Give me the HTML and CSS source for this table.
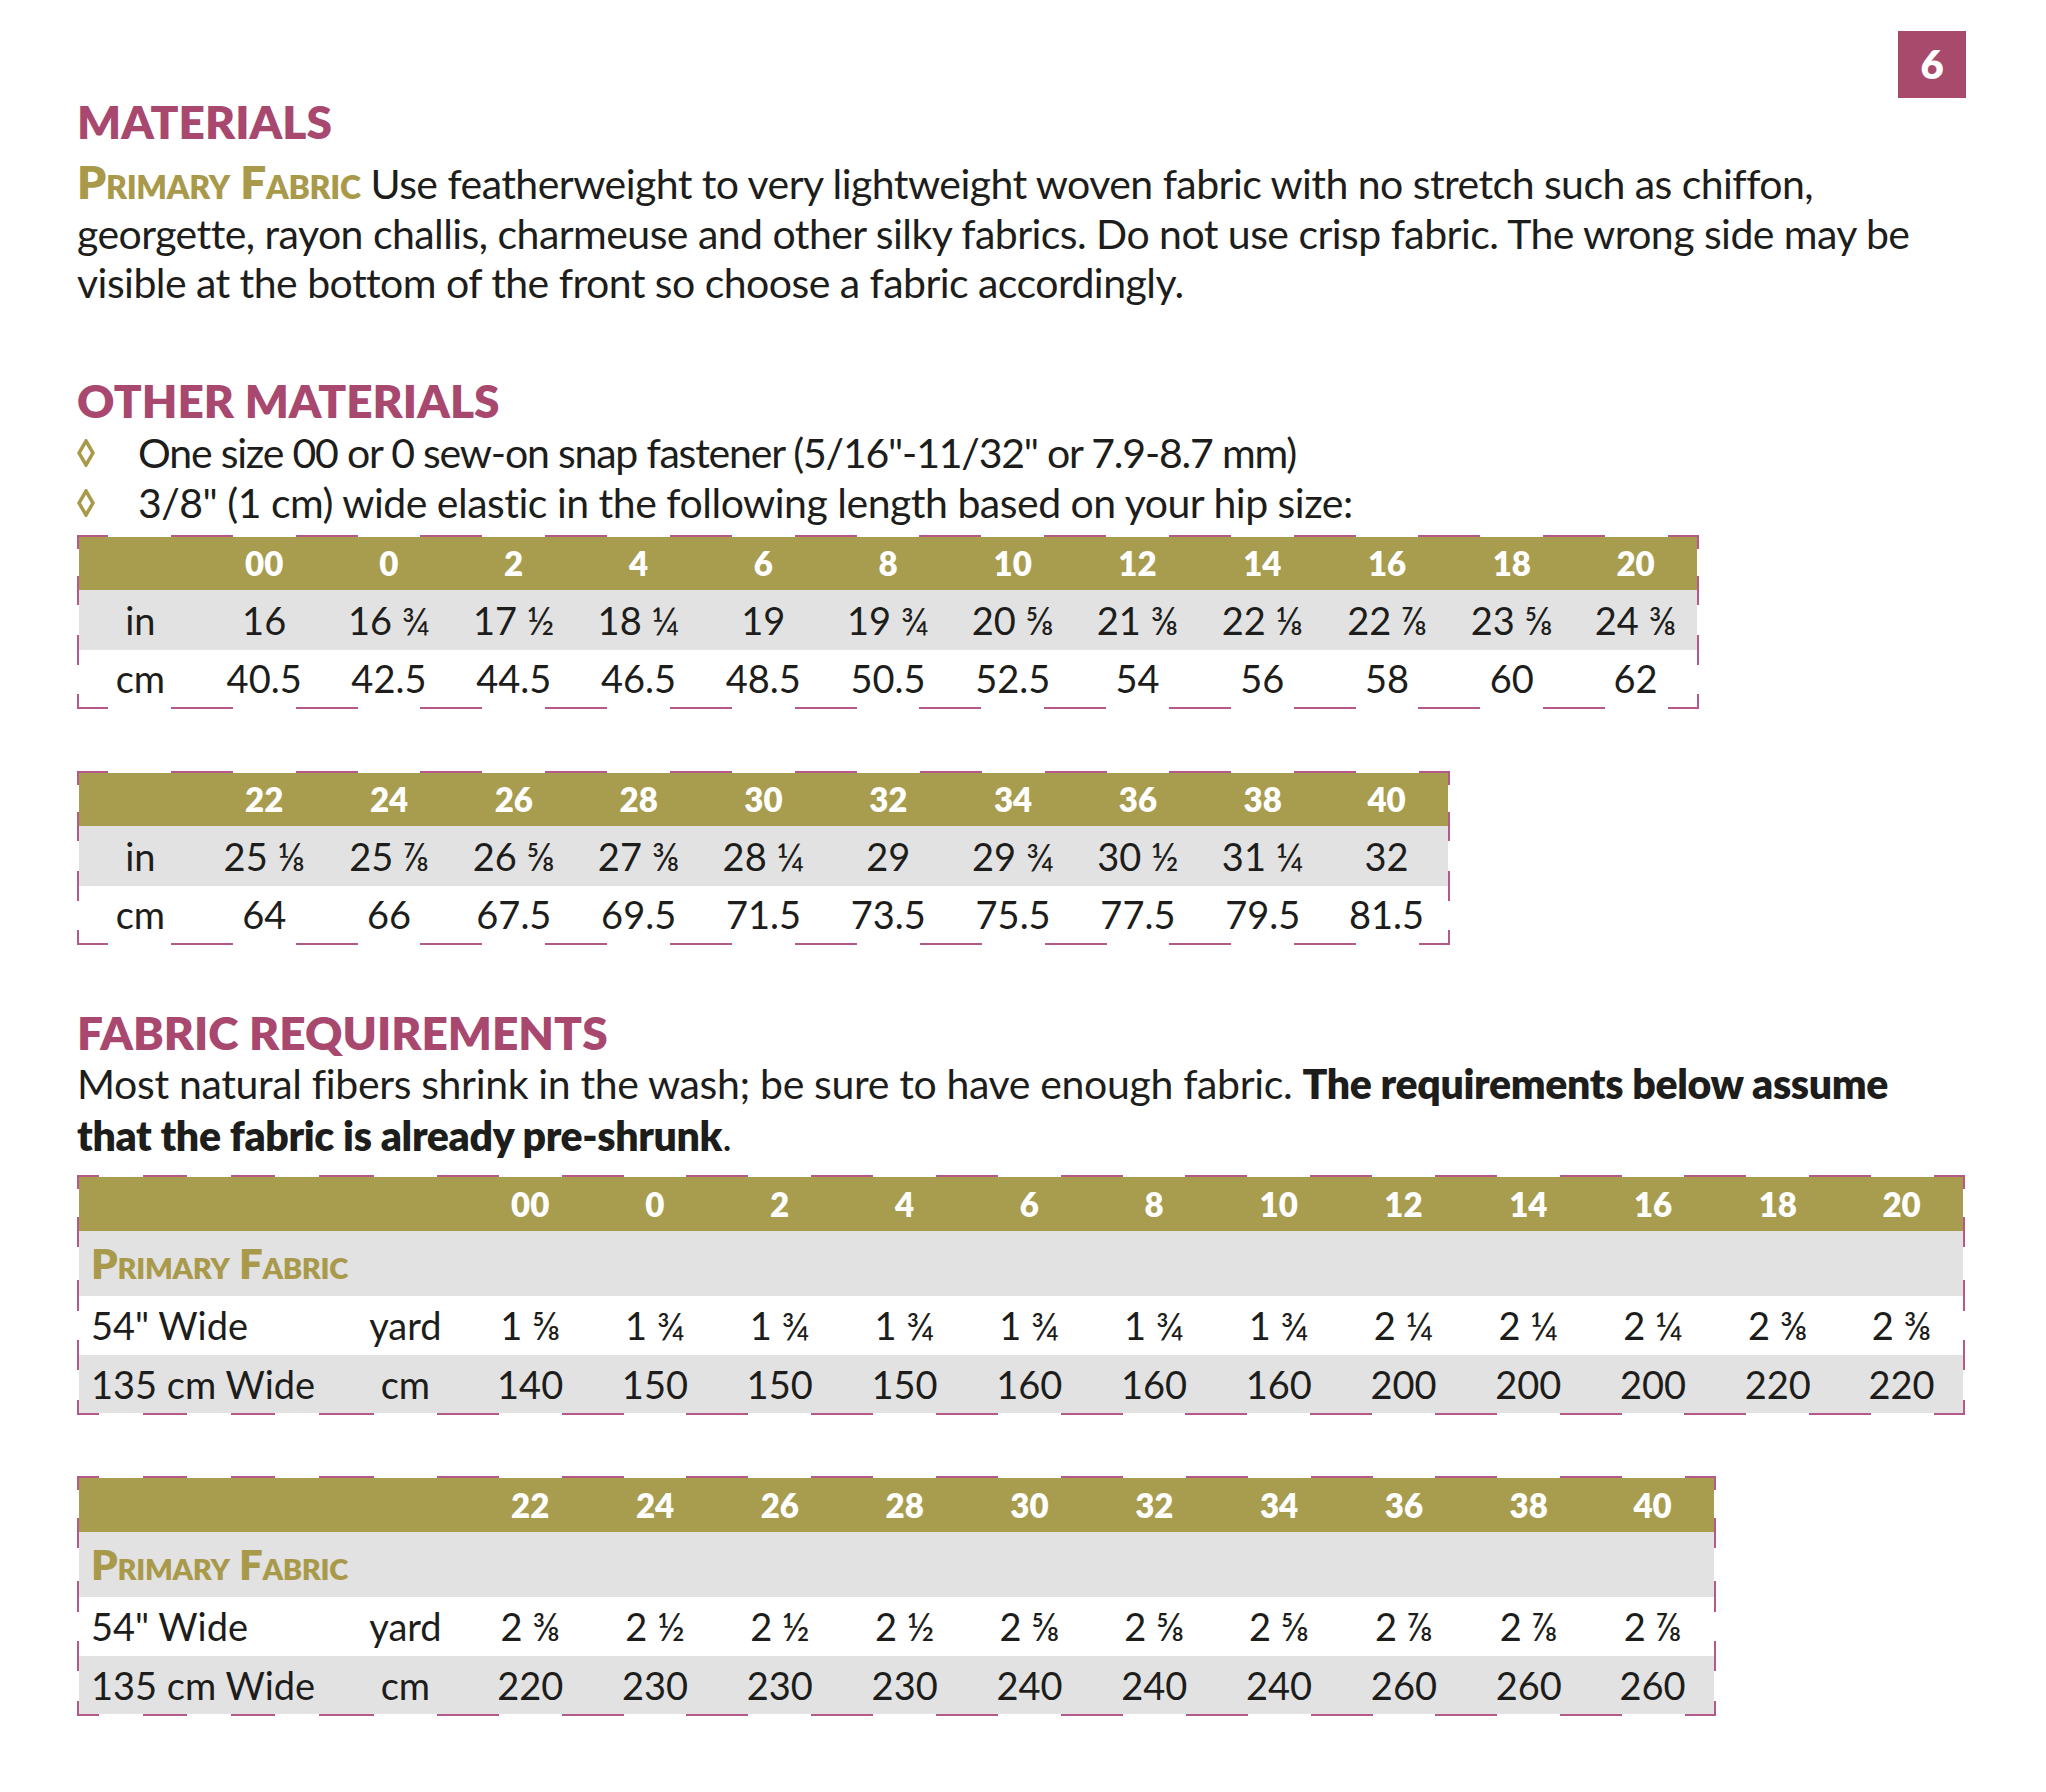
FILE: index.html
```html
<!DOCTYPE html>
<html lang="en">
<head>
    <meta charset="UTF-8">
    <title>Materials - page 6</title>
    <link rel="stylesheet" href="styles.css">
</head>
<body>
    <div class="page">
        <div class="page-number">6</div>

        <h2 class="section-title">MATERIALS</h2>
        <p class="text intro">
            <span class="fabric-name">Primary Fabric</span> Use featherweight to very lightweight woven fabric with no stretch such as chiffon,<br>
            georgette, rayon challis, charmeuse and other silky fabrics. Do not use crisp fabric. The wrong side may be<br>
            visible at the bottom of the front so choose a fabric accordingly.
        </p>

        <h2 class="section-title other-title">OTHER MATERIALS</h2>
        <ul class="bullets">
            <li class="tight">
                <svg class="diamond" viewBox="0 0 18 28"><polygon points="9,2 16,14 9,26 2,14"/></svg>
                <span>One size 00 or 0 sew-on snap fastener (5/16"-11/32" or 7.9-8.7 mm)</span>
            </li>
            <li>
                <svg class="diamond" viewBox="0 0 18 28"><polygon points="9,2 16,14 9,26 2,14"/></svg>
                <span>3/8" (1 cm) wide elastic in the following length based on your hip size:</span>
            </li>
        </ul>

        <table class="sizes elastic cols-13 first-table">
            <tr class="head">
                <th></th><th>00</th><th>0</th><th>2</th><th>4</th><th>6</th><th>8</th><th>10</th><th>12</th><th>14</th><th>16</th><th>18</th><th>20</th>
            </tr>
            <tr class="shade">
                <td>in</td><td>16</td><td>16 ¾</td><td>17 ½</td><td>18 ¼</td><td>19</td><td>19 ¾</td><td>20 ⅝</td><td>21 ⅜</td><td>22 ⅛</td><td>22 ⅞</td><td>23 ⅝</td><td>24 ⅜</td>
            </tr>
            <tr class="plain">
                <td>cm</td><td>40.5</td><td>42.5</td><td>44.5</td><td>46.5</td><td>48.5</td><td>50.5</td><td>52.5</td><td>54</td><td>56</td><td>58</td><td>60</td><td>62</td>
            </tr>
        </table>

        <table class="sizes elastic cols-11 next-table">
            <tr class="head">
                <th></th><th>22</th><th>24</th><th>26</th><th>28</th><th>30</th><th>32</th><th>34</th><th>36</th><th>38</th><th>40</th>
            </tr>
            <tr class="shade">
                <td>in</td><td>25 ⅛</td><td>25 ⅞</td><td>26 ⅝</td><td>27 ⅜</td><td>28 ¼</td><td>29</td><td>29 ¾</td><td>30 ½</td><td>31 ¼</td><td>32</td>
            </tr>
            <tr class="plain">
                <td>cm</td><td>64</td><td>66</td><td>67.5</td><td>69.5</td><td>71.5</td><td>73.5</td><td>75.5</td><td>77.5</td><td>79.5</td><td>81.5</td>
            </tr>
        </table>

        <h2 class="section-title fabric-title">FABRIC REQUIREMENTS</h2>
        <p class="text req">
            Most natural fibers shrink in the wash; be sure to have enough fabric. <b>The requirements below assume</b><br>
            <b>that the fabric is already pre-shrunk</b>.
        </p>

        <table class="sizes yardage wide-14 first-table">
            <colgroup><col class="label-col"><col span="13"></colgroup>
            <tr class="head">
                <th></th><th></th><th>00</th><th>0</th><th>2</th><th>4</th><th>6</th><th>8</th><th>10</th><th>12</th><th>14</th><th>16</th><th>18</th><th>20</th>
            </tr>
            <tr class="shade fabric-row">
                <td colspan="14"><span class="fabric-name">Primary Fabric</span></td>
            </tr>
            <tr class="plain">
                <td>54" Wide</td><td>yard</td><td>1 ⅝</td><td>1 ¾</td><td>1 ¾</td><td>1 ¾</td><td>1 ¾</td><td>1 ¾</td><td>1 ¾</td><td>2 ¼</td><td>2 ¼</td><td>2 ¼</td><td>2 ⅜</td><td>2 ⅜</td>
            </tr>
            <tr class="shade">
                <td>135 cm Wide</td><td>cm</td><td>140</td><td>150</td><td>150</td><td>150</td><td>160</td><td>160</td><td>160</td><td>200</td><td>200</td><td>200</td><td>220</td><td>220</td>
            </tr>
        </table>

        <table class="sizes yardage wide-12 next-table">
            <colgroup><col class="label-col"><col span="11"></colgroup>
            <tr class="head">
                <th></th><th></th><th>22</th><th>24</th><th>26</th><th>28</th><th>30</th><th>32</th><th>34</th><th>36</th><th>38</th><th>40</th>
            </tr>
            <tr class="shade fabric-row">
                <td colspan="12"><span class="fabric-name">Primary Fabric</span></td>
            </tr>
            <tr class="plain">
                <td>54" Wide</td><td>yard</td><td>2 ⅜</td><td>2 ½</td><td>2 ½</td><td>2 ½</td><td>2 ⅝</td><td>2 ⅝</td><td>2 ⅝</td><td>2 ⅞</td><td>2 ⅞</td><td>2 ⅞</td>
            </tr>
            <tr class="shade">
                <td>135 cm Wide</td><td>cm</td><td>220</td><td>230</td><td>230</td><td>230</td><td>240</td><td>240</td><td>240</td><td>260</td><td>260</td><td>260</td>
            </tr>
        </table>
    </div>
</body>
</html>
```

FILE: styles.css
```css
body {
    margin: 0;
    background-color: white;
    color: #1d1d1b;
    font-family: "Lato", "Noto Sans", sans-serif;
}
.page {
    padding: 31px 80px 40px 77px;
}
.page-number {
    float: right;
    width: 68px;
    height: 67px;
    background-color: #a84a6c;
    color: white;
    font-size: 40px;
    font-weight: 800;
    line-height: 67px;
    text-align: center;
}
.section-title {
    margin: 66px 0 0;
    font-size: 46px;
    line-height: 50px;
    font-weight: 800;
    color: #a8486e;
}
.other-title {
    margin-top: 68px;
}
.fabric-title {
    margin-top: 63px;
}
.text {
    margin: 10px 0 0;
    font-size: 41px;
    line-height: 49.5px;
    letter-spacing: -0.55px;
    white-space: nowrap;
}
.text.req {
    margin-top: 0;
    line-height: 52px;
    letter-spacing: -0.35px;
}
.text b {
    font-weight: 800;
}
.fabric-name {
    font-weight: 800;
    font-size: 46px;
    font-variant: small-caps;
    letter-spacing: -0.3px;
    color: #a99a4b;
}
.bullets {
    list-style: none;
    margin: 2px 0 0;
    padding: 0;
    font-size: 41px;
    line-height: 50px;
    letter-spacing: -0.5px;
}
.bullets .tight {
    letter-spacing: -1.2px;
}
.bullets li {
    display: flex;
    align-items: flex-start;
    white-space: nowrap;
}
.diamond {
    width: 18px;
    height: 28px;
    margin: 11px 43px 0 0;
    flex: none;
}
.diamond polygon {
    fill: none;
    stroke: #a99a4b;
    stroke-width: 3.5;
}

/* size tables */
.sizes {
    --pink: #b5588a;
    --none: linear-gradient(transparent, transparent);
    --dash-h: linear-gradient(to right, var(--pink) 25%, transparent 25% 75%, var(--pink) 75%);
    --dash-v: linear-gradient(to bottom, var(--pink) 25%, transparent 25% 75%, var(--pink) 75%);
    border-collapse: separate;
    border-spacing: 0;
    table-layout: fixed;
    font-size: 38px;
}
.first-table {
    margin-top: 7px;
}
.elastic.next-table {
    margin-top: 62px;
}
.yardage.first-table {
    margin-top: 13px;
}
.yardage.next-table {
    margin-top: 61px;
}
.cols-13 { width: 1622px; }
.cols-11 { width: 1373px; }
.wide-14 { width: 1888px; }
.wide-12 { width: 1639px; }
.label-col { width: 266px; }
.sizes th, .sizes td {
    --t: var(--none);
    --b: var(--none);
    --l: var(--none);
    --r: var(--none);
    padding: 0;
    text-align: center;
    vertical-align: middle;
    white-space: nowrap;
    border: 0 solid transparent;
    background-image: var(--t), var(--b), var(--l), var(--r), var(--none);
    background-size: 100% 2px, 100% 2px, 2px 100%, 2px 100%, 100% 100%;
    background-position: left top, left bottom, left top, right top, left top;
    background-repeat: no-repeat;
    background-origin: border-box;
    background-clip: border-box, border-box, border-box, border-box, padding-box;
}
.sizes tr:first-child > * {
    border-top-width: 2px;
    --t: var(--dash-h);
}
.sizes tr:last-child > * {
    border-bottom-width: 2px;
    --b: var(--dash-h);
}
.sizes tr > :first-child {
    border-left-width: 2px;
    --l: var(--dash-v);
}
.sizes tr > :last-child {
    border-right-width: 2px;
    --r: var(--dash-v);
}
.yardage tr > :first-child {
    --dash-h: repeating-linear-gradient(to right, var(--pink) 0 22px, transparent 22px 66px, var(--pink) 66px 88px);
    text-align: left;
    padding-left: 12px;
}
.yardage .fabric-row > :first-child {
    --dash-h: none;
}
.head > * {
    background-color: #a89c4e;
    color: white;
    font-size: 33px;
    font-weight: 800;
}
.shade > * {
    background-color: #e2e2e2;
}
.elastic .head { height: 55px; }
.elastic .shade { height: 60px; }
.elastic .plain { height: 59px; }
.yardage .head { height: 56px; }
.yardage .fabric-row { height: 65px; }
.yardage .plain { height: 59px; }
.yardage tr:last-child { height: 60px; }
.fabric-row .fabric-name {
    font-size: 42px;
}
```
